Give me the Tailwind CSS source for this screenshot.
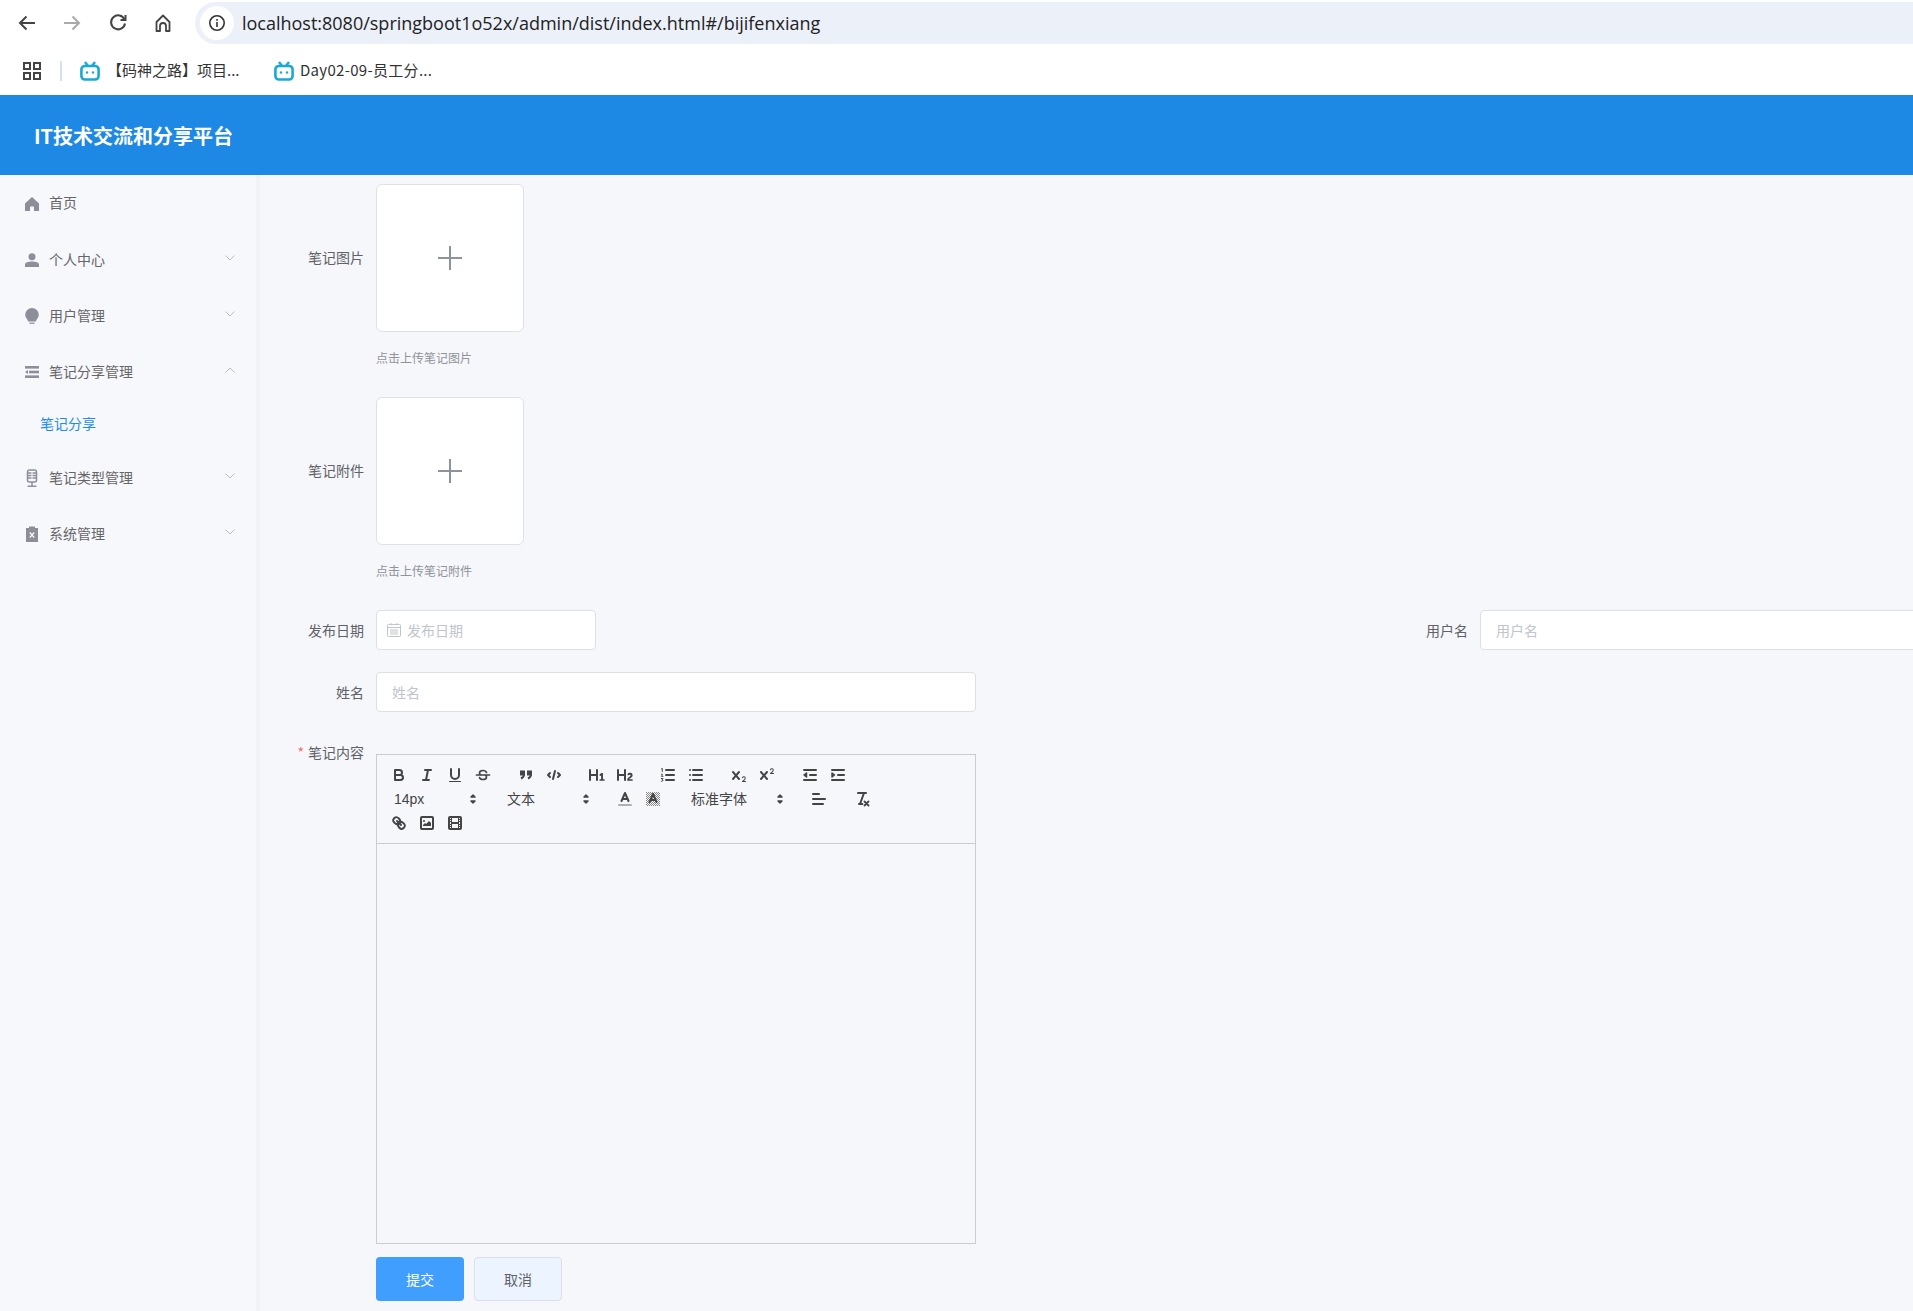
<!DOCTYPE html>
<html lang="zh"><head><meta charset="utf-8"><title>IT技术交流和分享平台</title>
<script src="https://cdn.jsdelivr.net/npm/@tailwindcss/browser@4"></script></head>
<body class="w-[1913px] h-[1311px] overflow-hidden bg-[#f5f7fb] font-['Noto_Sans_CJK_SC','Noto_Sans',sans-serif] text-[14px] text-[#606266]">

<!-- browser chrome -->
<div class="h-[95px] bg-white">
  <div class="h-[46px] flex items-start pt-[2px] pl-[16px]">
    <div class="h-[42px] flex items-center gap-[23.300px] text-[#444]">
      <svg class="w-[22px] h-[22px]" viewBox="0 0 22 22" fill="none" stroke="#444" stroke-width="2"><path d="M19 11H4M10.500 4.500 4 11l6.500 6.500"/></svg>
      <svg class="w-[22px] h-[22px]" viewBox="0 0 22 22" fill="none" stroke="#aaa" stroke-width="2"><path d="M3 11h15M11.500 4.500 18 11l-6.500 6.500"/></svg>
      <svg class="w-[22px] h-[22px]" viewBox="0 0 22 22" fill="none" stroke="#444" stroke-width="2"><path d="M17.500 7.500A7 7 0 1 0 18 11.500"/><path d="M18.500 3V8H13.500"/></svg>
      <svg class="w-[22px] h-[22px]" viewBox="0 0 22 22" fill="none" stroke="#444" stroke-width="1.800" stroke-linejoin="round"><path d="M4.500 10 11 3.500l6.500 6.500v9H14v-5a3 3 0 0 0-6 0v5H4.500z"/></svg>
    </div>
    <div class="ml-[21px] flex-1 h-[42px] bg-[#ebf0f9] rounded-l-[21px] flex items-center pl-[5px]">
      <div class="w-[34px] h-[34px] rounded-full bg-white flex items-center justify-center">
        <svg class="w-[18px] h-[18px]" viewBox="0 0 18 18" fill="none" stroke="#333" stroke-width="1.600"><circle cx="9" cy="9" r="7.200"/><path d="M9 8v5M9 5v1.800"/></svg>
      </div>
      <span class="ml-[8px] text-[18px] text-[#222] font-['Open_Sans',sans-serif] whitespace-nowrap">localhost:8080/springboot1o52x/admin/dist/index.html#/bijifenxiang</span>
    </div>
  </div>
  <div class="h-[49px] flex items-center pl-[23px] text-[15px] text-[#333]">
    <svg class="w-[18px] h-[18px]" viewBox="0 0 18 18" fill="none" stroke="#444" stroke-width="2"><rect x="1" y="1" width="6" height="6"/><rect x="11" y="1" width="6" height="6"/><rect x="1" y="11" width="6" height="6"/><rect x="11" y="11" width="6" height="6"/></svg>
    <div class="ml-[19px] w-[2px] h-[20px] bg-[#d3e1f7]"></div>
    <svg class="ml-[18px] w-[20px] h-[20px] mt-[1px]" viewBox="0 0 20 20"><rect x="1.400" y="5" width="17.200" height="13.500" rx="3.500" fill="#fff" stroke="#1aa9d6" stroke-width="2.600"/><path d="M5 1 8 5M15 1 12 5" fill="none" stroke="#1aa9d6" stroke-width="2.400"/><circle cx="7" cy="11.500" r="1.200" fill="#1aa9d6"/><circle cx="13" cy="11.500" r="1.200" fill="#1aa9d6"/></svg>
    <span class="ml-[7px] whitespace-nowrap w-[137px]">【码神之路】项目...</span>
    <svg class="ml-[30px] w-[20px] h-[20px] mt-[1px]" viewBox="0 0 20 20"><rect x="1.400" y="5" width="17.200" height="13.500" rx="3.500" fill="#fff" stroke="#1aa9d6" stroke-width="2.600"/><path d="M5 1 8 5M15 1 12 5" fill="none" stroke="#1aa9d6" stroke-width="2.400"/><circle cx="7" cy="11.500" r="1.200" fill="#1aa9d6"/><circle cx="13" cy="11.500" r="1.200" fill="#1aa9d6"/></svg>
    <span class="ml-[6px] whitespace-nowrap tracking-[0.3px]">Day02-09-员工分...</span>
  </div>
</div>

<!-- app header -->
<header class="h-[80px] bg-[#1e88e5] flex items-center pl-[34px] pt-[2px] text-[20px] font-bold text-white">IT技术交流和分享平台</header>

<div class="flex h-[1136px] overflow-hidden">
  <!-- sidebar -->
  <aside class="w-[260px] shrink-0 bg-[#f6f8fc] border-r-[4px] border-[#f1f2f5] text-[#666]">
    <div class="h-[57px] flex items-center pl-[25px]">
      <svg class="w-[14px] h-[14px]" viewBox="0 0 14 14" fill="#8c8f99"><path d="M7 0 14 6.500V14H9V9.500H5V14H0V6.500z"/></svg>
      <span class="ml-[10px] pb-[2px]">首页</span>
    </div>
    <div class="h-[56px] flex items-center pl-[25px] pr-[20px]">
      <svg class="w-[14px] h-[14px]" viewBox="0 0 14 14" fill="#8c8f99"><circle cx="7" cy="3.800" r="3.500"/><path d="M0 14v-2.500C0 9.500 3 8.500 7 8.500s7 1 7 3V14z"/></svg>
      <span class="ml-[10px] pb-[2px] flex-1">个人中心</span>
      <svg class="w-[12px] h-[8px] mb-[4px]" viewBox="0 0 12 8" fill="none" stroke="#b9bcc4"><path d="M1.500 1.500 6 6l4.500-4.500"/></svg>
    </div>
    <div class="h-[56px] flex items-center pl-[25px] pr-[20px]">
      <svg class="w-[14px] h-[16px]" viewBox="0 0 14 16" fill="#8c8f99"><path d="M7 0a6.800 6.800 0 0 1 6.800 6.800c0 3-2.300 4.200-3 6.700H3.200C2.500 11 .2 9.800.2 6.800A6.800 6.800 0 0 1 7 0z"/><rect x="4.500" y="14.500" width="5" height="1.300"/></svg>
      <span class="ml-[10px] pb-[2px] flex-1">用户管理</span>
      <svg class="w-[12px] h-[8px] mb-[4px]" viewBox="0 0 12 8" fill="none" stroke="#b9bcc4"><path d="M1.500 1.500 6 6l4.500-4.500"/></svg>
    </div>
    <div class="h-[56px] flex items-center pl-[25px] pr-[20px]">
      <svg class="w-[14px] h-[12px]" viewBox="0 0 14 12" fill="#8c8f99"><rect width="14" height="2.600"/><rect x="4" y="4.700" width="10" height="2.600"/><rect y="9.400" width="14" height="2.600"/><path d="M0 6 3 4v4z"/></svg>
      <span class="ml-[10px] pb-[2px] flex-1">笔记分享管理</span>
      <svg class="w-[12px] h-[8px] mb-[4px]" viewBox="0 0 12 8" fill="none" stroke="#b9bcc4"><path d="M1.500 6.500 6 2l4.500 4.500"/></svg>
    </div>
    <div class="h-[50px] flex items-center pl-[40px] pb-[4px] text-[#1f8ceb]">笔记分享</div>
    <div class="h-[56px] flex items-center pl-[25px] pr-[20px]">
      <svg class="w-[14px] h-[18px]" viewBox="0 0 14 18" fill="none" stroke="#8c8f99" stroke-width="1.500"><rect x="2.500" y="1" width="9" height="12" rx="2"/><path d="M2.500 4h4M2.500 6.500h4M2.500 9h4M7.500 4h4M7.500 6.500h4M7.500 9h4M7 13v4M2.500 17.200h9"/></svg>
      <span class="ml-[10px] pb-[2px] flex-1">笔记类型管理</span>
      <svg class="w-[12px] h-[8px] mb-[4px]" viewBox="0 0 12 8" fill="none" stroke="#b9bcc4"><path d="M1.500 1.500 6 6l4.500-4.500"/></svg>
    </div>
    <div class="h-[56px] flex items-center pl-[25px] pr-[20px]">
      <svg class="w-[14px] h-[16px]" viewBox="0 0 14 16"><path fill="#8c8f99" d="M1 2h3V.500h6V2h3v14H1z"/><path stroke="#f6f8fc" stroke-width="1.300" d="M4.800 6.500 9.200 11.500M9.200 6.500 4.800 11.500"/></svg>
      <span class="ml-[10px] pb-[1px] flex-1">系统管理</span>
      <svg class="w-[12px] h-[8px] mb-[4px]" viewBox="0 0 12 8" fill="none" stroke="#b9bcc4"><path d="M1.500 1.500 6 6l4.500-4.500"/></svg>
    </div>
  </aside>

  <!-- form -->
  <main class="flex-1 min-w-0 pt-[9px] overflow-hidden">
    <div class="flex items-center">
      <label class="w-[104px] mr-[12px] pb-[2px] text-right">笔记图片</label>
      <div class="w-[148px] h-[148px] bg-white border border-[#dfe1ea] rounded-[6px] flex items-center justify-center">
        <svg class="w-[24px] h-[24px]" viewBox="0 0 24 24" stroke="#8c939d" stroke-width="2"><path d="M0 12h24M12 0v24"/></svg>
      </div>
    </div>
    <p class="ml-[116px] mt-[14px] mb-[27px] h-[24px] leading-[24px] text-[12px] text-[#909399]">点击上传笔记图片</p>
    <div class="flex items-center">
      <label class="w-[104px] mr-[12px] pb-[2px] text-right">笔记附件</label>
      <div class="w-[148px] h-[148px] bg-white border border-[#dfe1ea] rounded-[6px] flex items-center justify-center">
        <svg class="w-[24px] h-[24px]" viewBox="0 0 24 24" stroke="#8c939d" stroke-width="2"><path d="M0 12h24M12 0v24"/></svg>
      </div>
    </div>
    <p class="ml-[116px] mt-[14px] mb-[27px] h-[24px] leading-[24px] text-[12px] text-[#909399]">点击上传笔记附件</p>

    <div class="flex items-center">
      <label class="w-[104px] shrink-0 mr-[12px] text-right whitespace-nowrap">发布日期</label>
      <div class="w-[220px] shrink-0 h-[40px] bg-white border border-[#dcdfe6] rounded-[4px] flex items-center pl-[10px] text-[#c0c4cc]">
        <svg class="w-[14px] h-[14px]" viewBox="0 0 14 14" fill="none" stroke="#c0c4cc"><rect x=".5" y="1.500" width="13" height="12" rx="1"/><path d="M.5 4.500h13M3 7h8M3 9h8M3 11h8M4 0v2M10 0v2"/></svg>
        <span class="ml-[6px]">发布日期</span>
      </div>
      <label class="w-[132px] ml-[740px] mr-[12px] shrink-0 text-right">用户名</label>
      <div class="w-[600px] shrink-0 h-[40px] bg-white border border-[#dcdfe6] rounded-[4px] flex items-center pl-[15px] text-[#c0c4cc]">用户名</div>
    </div>

    <div class="flex items-center mt-[22px]">
      <label class="w-[104px] mr-[12px] text-right">姓名</label>
      <div class="w-[600px] h-[40px] bg-white border border-[#dcdfe6] rounded-[4px] flex items-center pl-[15px] text-[#c0c4cc]">姓名</div>
    </div>

    <div class="flex items-start mt-[20px]">
      <label class="w-[104px] mr-[12px] h-[40px] leading-[40px] text-right"><span class="text-[#f56c6c] mr-[4px]">*</span>笔记内容</label>
      <div class="w-[600px] mt-[22px]">
        <div class="h-[90px] border border-[#ccc] p-[8px] pr-0 font-['Liberation_Sans','Noto_Sans_CJK_SC',sans-serif] text-[#444]">
          <!-- row 1 -->
          <div class="flex h-[24px]">
            <div class="flex mr-[15px]">
              <span class="w-[28px] h-[24px] px-[5px] py-[3px]"><svg class="w-[18px] h-[18px]" viewBox="0 0 18 18" fill="none" stroke="#444" stroke-width="2" stroke-linecap="round" stroke-linejoin="round"><path d="M5 4h4.500a2.500 2.500 0 0 1 0 5H5zM5 9h5.500a2.500 2.500 0 0 1 0 5H5z"/></svg></span>
              <span class="w-[28px] h-[24px] px-[5px] py-[3px]"><svg class="w-[18px] h-[18px]" viewBox="0 0 18 18" fill="none" stroke="#444" stroke-width="2" stroke-linecap="round"><path d="M7 4h6M5 14h6M8 14l2-10"/></svg></span>
              <span class="w-[28px] h-[24px] px-[5px] py-[3px]"><svg class="w-[18px] h-[18px]" viewBox="0 0 18 18" fill="none" stroke="#444" stroke-width="2" stroke-linecap="round"><path d="M5 3v6a4 4 0 0 0 8 0V3"/><rect x="3" y="15" width="12" height="1" rx=".5" fill="#444" stroke="none"/></svg></span>
              <span class="w-[28px] h-[24px] px-[5px] py-[3px]"><svg class="w-[18px] h-[18px]" viewBox="0 0 18 18" fill="none" stroke="#444" stroke-width="1.700" stroke-linecap="round"><path d="M2.500 9h13M12.500 6.500C12 5 10.500 4.500 9 4.500C7 4.500 5.500 5.500 5.500 7C5.500 8 6 8.600 7 9M11 9C12 9.500 12.500 10 12.500 11C12.500 12.500 11 13.500 9 13.500C7.500 13.500 6 13 5.500 11.500"/></svg></span>
            </div>
            <div class="flex mr-[15px]">
              <span class="w-[28px] h-[24px] px-[5px] py-[3px]"><svg class="w-[18px] h-[18px]" viewBox="0 0 18 18" fill="#444" stroke="#444" stroke-width="2"><rect x="4" y="5.500" width="3" height="3"/><rect x="11" y="5.500" width="3" height="3"/><path fill="none" d="M7 8.500c0 2-1 3-3 4M14 8.500c0 2-1 3-3 4"/></svg></span>
              <span class="w-[28px] h-[24px] px-[5px] py-[3px]"><svg class="w-[18px] h-[18px]" viewBox="0 0 18 18" fill="none" stroke="#444" stroke-width="2" stroke-linecap="round" stroke-linejoin="round"><path d="M5 7 3 9l2 2M13 7l2 2-2 2M10 5 8 13"/></svg></span>
            </div>
            <div class="flex mr-[15px]">
              <span class="w-[28px] h-[24px] px-[5px] py-[3px]"><svg class="w-[18px] h-[18px]" viewBox="0 0 18 18" fill="#444"><path d="M10,4V14a1,1,0,0,1-2,0V10H3v4a1,1,0,0,1-2,0V4a1,1,0,0,1,2,0V8H8V4a1,1,0,0,1,2,0Zm6.068,9.209H14.990V7.599a.541.541,0,0,0-.605-.605h-.627a1.011,1.011,0,0,0-.748.297L11.645,8.566a.544.544,0,0,0-.022.858l.286.308a.539.539,0,0,0,.847.033l.099-.088a1.214,1.214,0,0,0,.242-.353h.022s-.011.309-.011.605V13.209H12.041a.541.541,0,0,0-.605.605v.439a.541.541,0,0,0,.605.606h4.027a.541.541,0,0,0,.605-.606v-.439A.541.541,0,0,0,16.068,13.209Z"/></svg></span>
              <span class="w-[28px] h-[24px] px-[5px] py-[3px]"><svg class="w-[18px] h-[18px]" viewBox="0 0 18 18" fill="#444"><path d="M16.740,13.814v.439a.541.541,0,0,1-.605.606H11.855a.584.584,0,0,1-.649-.606V14.013c0-2.905,3.399-3.422,3.399-4.555a.777.777,0,0,0-.847-.781,1.177,1.177,0,0,0-.836.385c-.275.264-.561.374-.858.132l-.429-.341c-.308-.242-.385-.518-.154-.814a2.972,2.972,0,0,1,2.454-1.177,2.454,2.454,0,0,1,2.684,2.409c0,2.453-3.179,2.927-3.278,3.938h2.794A.541.541,0,0,1,16.740,13.814ZM9,3A1,1,0,0,0,8,4V8H3V4A1,1,0,0,0,1,4V14a1,1,0,0,0,2,0V10H8v4a1,1,0,0,0,2,0V4A1,1,0,0,0,9,3Z"/></svg></span>
            </div>
            <div class="flex mr-[15px]">
              <span class="w-[28px] h-[24px] px-[5px] py-[3px]"><svg class="w-[18px] h-[18px]" viewBox="0 0 18 18" fill="none" stroke="#444" stroke-width="2" stroke-linecap="round"><path d="M7 4h8M7 9h8M7 14h8"/><path stroke-width="1" d="M2.500 2.800 3.300 2.500V5.500M2.300 8.200C3.500 7.300 4 8.500 2.300 10.300H4M2.400 12.500H4L3 13.800C4.500 13.800 4 15.800 2.300 15.300"/></svg></span>
              <span class="w-[28px] h-[24px] px-[5px] py-[3px]"><svg class="w-[18px] h-[18px]" viewBox="0 0 18 18" fill="none" stroke="#444" stroke-width="2" stroke-linecap="round"><path d="M6 4h9M6 9h9M6 14h9M3 4h0M3 9h0M3 14h0"/></svg></span>
            </div>
            <div class="flex mr-[15px]">
              <span class="w-[28px] h-[24px] px-[5px] py-[3px]"><svg class="w-[18px] h-[18px]" viewBox="0 0 18 18" fill="#444"><path d="M15.500,15H13.861a3.858,3.858,0,0,0,1.914-2.975,1.800,1.800,0,0,0-1.600-1.751A1.921,1.921,0,0,0,12.021,11.700a.5.5,0,1,0,.957.291.914.914,0,0,1,1.053-.725.81.81,0,0,1,.744.762c0,1.076-1.170,1.870-1.940,2.431A1.456,1.456,0,0,0,12,15.500a.5.5,0,0,0,.5.5h3A.5.5,0,0,0,15.500,15Z"/><path d="M9.650,5.241a1,1,0,0,0-1.409.108L6,7.964,3.759,5.349a1,1,0,1,0-1.519,1.300L4.684,9.500,2.241,12.350a1,1,0,0,0,1.519,1.300L6,11.036,8.241,13.650a1,1,0,1,0,1.519-1.300L7.316,9.500,9.759,6.651A1,1,0,0,0,9.650,5.241Z"/></svg></span>
              <span class="w-[28px] h-[24px] px-[5px] py-[3px]"><svg class="w-[18px] h-[18px]" viewBox="0 0 18 18" fill="#444"><path d="M15.500,7H13.861a4.015,4.015,0,0,0,1.914-2.975,1.800,1.800,0,0,0-1.600-1.751A1.922,1.922,0,0,0,12.021,3.700a.5.5,0,1,0,.957.291.917.917,0,0,1,1.053-.725.81.81,0,0,1,.744.762c0,1.077-1.164,1.925-1.934,2.486A1.423,1.423,0,0,0,12,7.500a.5.5,0,0,0,.5.5h3A.5.5,0,0,0,15.500,7Z"/><path d="M9.651,5.241a1,1,0,0,0-1.410.108L6,7.964,3.759,5.349a1,1,0,1,0-1.519,1.300L4.683,9.500,2.241,12.350a1,1,0,1,0,1.519,1.300L6,11.036,8.241,13.650a1,1,0,0,0,1.519-1.300L7.317,9.500,9.759,6.651A1,1,0,0,0,9.651,5.241Z"/></svg></span>
            </div>
            <div class="flex">
              <span class="w-[28px] h-[24px] px-[5px] py-[3px]"><svg class="w-[18px] h-[18px]" viewBox="0 0 18 18" fill="#444" stroke="#444" stroke-width="2" stroke-linecap="round" stroke-linejoin="round"><path d="M3 14h12M3 4h12M9 9h6"/><path stroke-width="1.500" d="M5.500 7v4L3 9z"/></svg></span>
              <span class="w-[28px] h-[24px] px-[5px] py-[3px]"><svg class="w-[18px] h-[18px]" viewBox="0 0 18 18" fill="#444" stroke="#444" stroke-width="2" stroke-linecap="round" stroke-linejoin="round"><path d="M3 14h12M3 4h12M9 9h6"/><path stroke-width="1.500" d="M3 7v4l2.500-2z"/></svg></span>
            </div>
          </div>
          <!-- row 2 -->
          <div class="flex h-[24px]">
            <div class="w-[98px] h-[24px] mr-[15px] flex items-center justify-between pl-[9px] pr-[1px]"><span>14px</span><svg class="w-[18px] h-[18px]" viewBox="0 0 18 18" fill="#444" stroke="#444" stroke-width="1.500" stroke-linejoin="round"><path d="M7 11l2 2 2-2zM7 7l2-2 2 2z"/></svg></div>
            <div class="w-[98px] h-[24px] mr-[15px] flex items-center justify-between pl-[9px] pr-[1px]"><span>文本</span><svg class="w-[18px] h-[18px]" viewBox="0 0 18 18" fill="#444" stroke="#444" stroke-width="1.500" stroke-linejoin="round"><path d="M7 11l2 2 2-2zM7 7l2-2 2 2z"/></svg></div>
            <div class="flex mr-[15px]">
              <span class="w-[28px] h-[24px] px-[5px] py-[3px]"><svg class="w-[18px] h-[18px]" viewBox="0 0 18 18" fill="none" stroke="#444" stroke-width="2" stroke-linecap="round" stroke-linejoin="round"><path d="M5.500 11 9 3l3.500 8M11.630 9H6.370"/><path stroke="#b0b0b0" d="M3 15h12"/></svg></span>
              <span class="w-[28px] h-[24px] px-[5px] py-[3px]"><svg class="w-[18px] h-[18px]" viewBox="0 0 18 18" fill="none"><defs><pattern id="dither" width="2" height="2" patternUnits="userSpaceOnUse"><rect width="1" height="1" fill="#888"/><rect x="1" y="1" width="1" height="1" fill="#888"/></pattern></defs><rect x="2" y="2" width="14" height="14" fill="url(#dither)"/><path stroke="#444" stroke-width="2" stroke-linecap="round" stroke-linejoin="round" d="M5.500 12 9 4l3.500 8M11.630 10H6.370"/></svg></span>
            </div>
            <div class="w-[108px] h-[24px] mr-[15px] flex items-center justify-between pl-[9px] pr-[1px]"><span>标准字体</span><svg class="w-[18px] h-[18px]" viewBox="0 0 18 18" fill="#444" stroke="#444" stroke-width="1.500" stroke-linejoin="round"><path d="M7 11l2 2 2-2zM7 7l2-2 2 2z"/></svg></div>
            <span class="w-[28px] h-[24px] mr-[15px] px-[5px] py-[3px]"><svg class="w-[18px] h-[18px]" viewBox="0 0 18 18" fill="none" stroke="#444" stroke-width="2" stroke-linecap="round"><path d="M3 9h12M3 14h10M3 4h6"/></svg></span>
            <span class="w-[28px] h-[24px] px-[5px] py-[3px]"><svg class="w-[18px] h-[18px]" viewBox="0 0 18 18" fill="none" stroke="#444" stroke-width="2" stroke-linecap="round"><path d="M5 3h8M6 14h3.350M11 3 7 14"/><path stroke-width="1.800" d="M11.500 11.500l4 4M15.500 11.500l-4 4"/></svg></span>
          </div>
          <!-- row 3 -->
          <div class="flex h-[24px]">
            <span class="w-[28px] h-[24px] px-[5px] py-[3px]"><svg class="w-[18px] h-[18px]" viewBox="0 0 18 18" fill="none" stroke="#444" stroke-width="2" stroke-linecap="round"><path d="M7 7l4 4"/><path d="M8.900,4.577a3.476,3.476,0,0,1,.36,4.679A3.476,3.476,0,0,1,4.577,8.900C3.185,7.500,2.035,6.400,4.217,4.217S7.500,3.185,8.900,4.577Z"/><path d="M13.423,9.100a3.476,3.476,0,0,0-4.679-.36,3.476,3.476,0,0,0,.36,4.679c1.392,1.392,2.500,2.542,4.679.36S14.815,10.500,13.423,9.100Z"/></svg></span>
            <span class="w-[28px] h-[24px] px-[5px] py-[3px]"><svg class="w-[18px] h-[18px]" viewBox="0 0 18 18" fill="none"><rect x="3" y="3" width="12" height="12" rx="1" stroke="#444" stroke-width="2"/><path fill="#444" d="M5 12v-1l2-2 1 1 3-3 2 2v3z"/><circle cx="6" cy="7" r="1" fill="#444"/></svg></span>
            <span class="w-[28px] h-[24px] px-[5px] py-[3px]"><svg class="w-[18px] h-[18px]" viewBox="0 0 18 18" fill="#444"><rect x="3" y="3" width="12" height="12" rx="1" fill="none" stroke="#444" stroke-width="2"/><rect x="5" y="3" width="1" height="12"/><rect x="12" y="3" width="1" height="12"/><rect x="5" y="8" width="8" height="2"/><rect x="3" y="5" width="3" height="1"/><rect x="3" y="7" width="3" height="1"/><rect x="3" y="10" width="3" height="1"/><rect x="3" y="12" width="3" height="1"/><rect x="12" y="5" width="3" height="1"/><rect x="12" y="7" width="3" height="1"/><rect x="12" y="10" width="3" height="1"/><rect x="12" y="12" width="3" height="1"/></svg></span>
          </div>
        </div>
        <div class="h-[400px] border border-t-0 border-[#ccc]"></div>
        <div class="flex gap-[10px] mt-[13px]">
          <button class="w-[88px] h-[44px] rounded-[4px] bg-[#409eff] text-white">提交</button>
          <button class="w-[88px] h-[44px] rounded-[4px] bg-[#ecf5ff] border border-[#dcdfe6] text-[#606266]">取消</button>
        </div>
      </div>
    </div>
  </main>
</div>
</body></html>
